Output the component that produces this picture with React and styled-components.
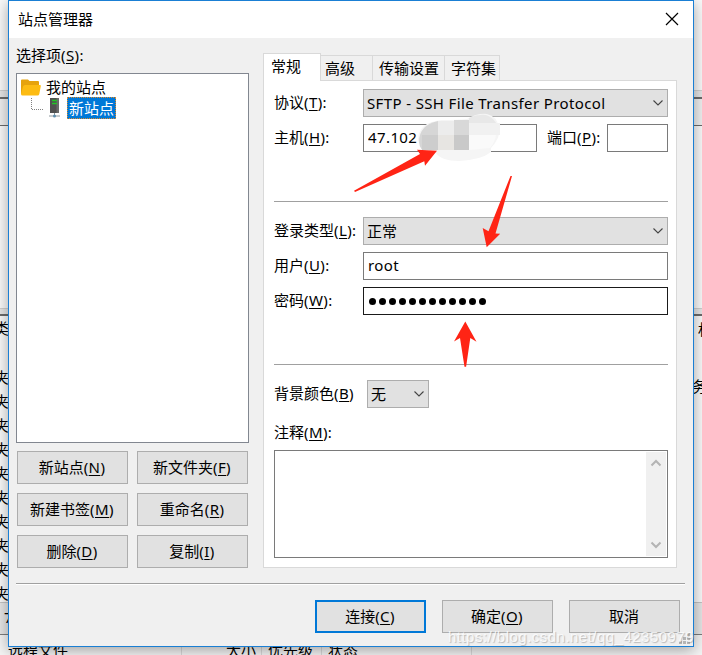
import React, { useState } from "react";
import styled, { createGlobalStyle } from "styled-components";

const GlobalStyle = createGlobalStyle`
  * {
    box-sizing: border-box;
  }
  body {
    margin: 0;
    overflow: hidden;
    font-family: "Noto Sans", "Noto Sans CJK SC", sans-serif;
    font-size: 15px;
    line-height: 20px;
    color: #000;
  }
  button, input, textarea {
    font: inherit;
    color: inherit;
  }
`;

const Screen = styled.div`
  position: relative;
  width: 702px;
  height: 655px;
  overflow: hidden;
  background-color: #f7f7f7;
`;

/* main window behind the dialog */
const MainWindow = styled.div`
  display: flex;
  flex-direction: column;
  height: 655px;
`;

const Band = styled.div`
  flex: none;
  height: ${(props) => props.$height}px;
  background-color: ${(props) => props.$color};
`;

const FileList = styled.div`
  display: flex;
  flex: none;
  justify-content: space-between;
  height: 286px;
  background-color: #fafafa;
`;

const FileColumn = styled.div`
  display: flex;
  flex-direction: column;
  width: 15px;
  margin-left: ${(props) => props.$shift || 0}px;
  margin-right: ${(props) => props.$right || 0}px;
  padding-top: ${(props) => props.$top}px;
`;

const FileCell = styled.span`
  height: 24px;
  line-height: 24px;
  margin-left: ${(props) => props.$shift || 0}px;
  margin-bottom: ${(props) => props.$after || 0}px;
  white-space: nowrap;
`;

const StatusBand = styled.div`
  flex: none;
  height: 32px;
  padding: 4px 4px;
  border-top: 1px solid #c4c4c4;
  background-color: #e6e6e6;
`;

const QueueHeader = styled.div`
  display: flex;
  height: 20px;
  background-color: #f4f4f4;
`;

const QueueCell = styled.div`
  flex: none;
  width: ${(props) => props.$width}px;
  padding: 5px 5px 0 ${(props) => props.$left || 6}px;
  border-right: 1px solid #d9d9d9;
  text-align: ${(props) => props.$align || "left"};
  white-space: nowrap;
`;

const Dialog = styled.div`
  position: absolute;
  top: 0;
  left: 8px;
  width: 686px;
  height: 647px;
  display: flex;
  flex-direction: column;
  border: 1px solid #1a7fd4;
  background-color: #f0f0f0;
  box-shadow: 0 3px 14px rgba(0, 0, 0, 0.35);
`;

const TitleBar = styled.div`
  display: flex;
  flex: none;
  justify-content: space-between;
  align-items: center;
  height: 37px;
  padding: 0 14px 2px 9px;
  background-color: #fff;
`;

const CloseButton = styled.button`
  display: flex;
  padding: 0;
  border: none;
  background: none;
`;

const Content = styled.div`
  display: flex;
  flex: none;
  height: 530px;
  padding-left: 7px;
`;

const Sidebar = styled.div`
  width: 233px;
  padding-top: 7px;
`;

const SidebarTitle = styled.div`
  height: 28px;
`;

const Tree = styled.div`
  height: 370px;
  padding: 3px 4px;
  border: 1px solid #828790;
  background-color: #fff;
`;

const TreeRow = styled.div`
  display: flex;
  align-items: center;
  height: 21px;
  padding-left: ${(props) => (props.$nested ? 10 : 0)}px;

  svg {
    flex: none;
  }
`;

const TreeLabel = styled.span`
  height: 22px;
  line-height: 20px;
  margin-top: -2px;
  margin-left: 3px;
  padding: 0 1px;
  border: 1px ${(props) => (props.$selected ? "dotted #e08a28" : "solid transparent")};
  background-color: ${(props) => (props.$selected ? "#0078d7" : "transparent")};
  color: ${(props) => (props.$selected ? "#fff" : "#000")};
`;

const ButtonGrid = styled.div`
  display: grid;
  grid-template-columns: 111px 111px;
  gap: 9px;
  padding: 8px 0 0 1px;
`;

const PushButton = styled.button`
  width: 111px;
  height: 33px;
  padding: 0 1px 2px 0;
  border: ${(props) => (props.$primary ? "2px solid #0078d7" : "1px solid #adadad")};
  background-color: #e1e1e1;
  line-height: 20px;
`;

const Notebook = styled.div`
  width: 414px;
  margin-left: 14px;
  padding-top: 15px;
`;

const TabBar = styled.div`
  display: flex;
  align-items: flex-end;
  height: 27px;
`;

const Tab = styled.button`
  position: relative;
  width: ${(props) => props.$width}px;
  height: ${(props) => (props.$active ? 28 : 25)}px;
  margin-bottom: ${(props) => (props.$active ? -1 : 0)}px;
  padding: ${(props) => (props.$active ? "0 6px 3px 7px" : `0 0 0 ${props.$indent}px`)};
  border: 1px solid #d9d9d9;
  border-left-width: ${(props) => (props.$active ? 1 : 0)}px;
  border-bottom: none;
  background-color: ${(props) => (props.$active ? "#fff" : "#f0f0f0")};
  text-align: left;
  white-space: nowrap;
`;

const Panel = styled.div`
  height: 488px;
  padding: 8px 8px 0 10px;
  border: 1px solid #d9d9d9;
  background-color: #fff;
`;

const FormRow = styled.div`
  display: flex;
  align-items: center;
  height: 28px;
  margin-bottom: ${(props) => props.$after || 0}px;
`;

const FieldLabel = styled.label`
  flex: none;
  width: ${(props) => props.$width || 89}px;
  margin-left: ${(props) => props.$before || 0}px;
  padding-bottom: 2px;
  white-space: nowrap;
`;

const ComboBox = styled.div`
  display: flex;
  justify-content: space-between;
  align-items: center;
  width: ${(props) => props.$width}px;
  height: 28px;
  padding: 0 3px 0 3px;
  border: 1px solid #adadad;
  background-color: #e1e1e1;
  white-space: nowrap;
`;

const ComboText = styled.span`
  padding-bottom: ${(props) => (props.$latin ? 1 : 0)}px;
  letter-spacing: ${(props) => (props.$latin ? 0.37 : 0)}px;
`;

const TextInput = styled.input`
  width: ${(props) => props.$width}px;
  height: 28px;
  padding: 0 4px 2px;
  border: 1px solid #7a7a7a;
  outline: none;
  background-color: #fff;
  letter-spacing: 0.4px;
`;

const PasswordBox = styled.div`
  display: flex;
  align-items: center;
  gap: 3px;
  width: 305px;
  height: 28px;
  padding-left: 5px;
  border: 1px solid #1a1a1a;
`;

const PasswordDot = styled.span`
  width: 7px;
  height: 7px;
  border-radius: 50%;
  background-color: #000;
`;

const Divider = styled.div`
  height: 1px;
  margin-bottom: ${(props) => props.$after || 0}px;
  background-color: #a0a0a0;
`;

const Comment = styled.div`
  display: flex;
  justify-content: flex-end;
  width: 394px;
  height: 108px;
  padding: 1px;
  border: 1px solid #7a7a7a;
`;

const ScrollBar = styled.div`
  display: flex;
  flex-direction: column;
  justify-content: space-between;
  align-items: center;
  width: 20px;
  padding: 7px 1px 7px 0;
  background-color: #f0f0f0;
`;

const FooterLine = styled.div`
  flex: none;
  height: 2px;
  margin: 15px 8px 0 7px;
  border-top: 1px solid #a0a0a0;
  border-bottom: 1px solid #fff;
`;

const Footer = styled.div`
  display: flex;
  justify-content: flex-end;
  gap: 16px;
  padding: 15px 13px 0 0;
`;

const Grip = styled.svg`
  position: absolute;
  right: 3px;
  bottom: 2px;
`;

const Overlay = styled.svg`
  position: absolute;
  top: 0;
  left: 0;
  pointer-events: none;
`;

const Watermark = styled.div`
  position: absolute;
  top: 627px;
  left: 448px;
  font-family: "Liberation Sans", sans-serif;
  font-size: 15px;
  letter-spacing: 0.48px;
  color: rgba(255, 255, 255, 0.8);
  text-shadow: 1px 1px 1px rgba(120, 120, 120, 0.45);
  white-space: nowrap;
`;

const HotkeyText = styled.span`
  letter-spacing: 0.4px;
`;

const Key = styled.span`
  text-decoration: underline;
  text-decoration-thickness: 1px;
  text-underline-offset: 2px;
  text-decoration-skip-ink: none;
`;

const Caption = ({ text, hotkey, colon }) => (
  <>
    {text}
    <HotkeyText>
      (<Key>{hotkey}</Key>){colon && ":"}
    </HotkeyText>
  </>
);

const Chevron = ({ up, color = "#444", thick = 1.1 }) => (
  <svg width="12" height="8" viewBox="0 0 12 8" fill="none">
    <path
      d={up ? "M1.5 6.5 6 2l4.5 4.5" : "M1.5 1.5 6 6l4.5-4.5"}
      stroke={color}
      strokeWidth={thick}
    />
  </svg>
);

const FolderIcon = () => (
  <svg width="20" height="17" viewBox="0 0 20 17">
    <path d="M0 1.5Q0 .5 1 .5h6l1.5 1.5h8.5q1 0 1 1V15H0z" fill="#e6a30d" />
    <path d="M4 6h15q1 0 .8 1l-1.5 8q-.3 1.5-1.8 1.5H1.5Q0 16.5 0 15l2-7.5Q2.5 6 4 6z" fill="#fdbc13" />
  </svg>
);

const BranchLine = () => (
  <svg width="13" height="21" viewBox="0 0 13 21" fill="none">
    <path d="M.5 0v11.5H13" stroke="#808080" strokeDasharray="1 1" />
  </svg>
);

const ServerIcon = () => (
  <svg width="20" height="21" viewBox="0 0 20 21">
    <path d="M6 0h9v15H6z" fill="#505050" />
    <path d="M12.5 0H15v15h-2.5z" fill="#6a6a6a" />
    <path d="M8 2.5h5M8 5.500h5" stroke="#22c526" strokeWidth="1.4" />
    <path d="M10.5 15v4M5 18h11" stroke="#8c969c" />
    <circle cx="10.5" cy="18" r="1.5" fill="#5f8fae" />
  </svg>
);

const sideButtons = [
  ["新站点", "N"],
  ["新文件夹", "F"],
  ["新建书签", "M"],
  ["重命名", "R"],
  ["删除", "D"],
  ["复制", "I"],
];

const tabs = [
  { name: "常规", width: 58, indent: 7 },
  { name: "高级", width: 52, indent: 4 },
  { name: "传输设置", width: 72, indent: 6 },
  { name: "字符集", width: 55, indent: 6 },
];

const folders = Array(10).fill("夹");

const App = () => {
  const [activeTab, setActiveTab] = useState("常规");

  return (
    <Screen>
      <GlobalStyle />
      <MainWindow>
        <Band $height={90} $color="#fafafa" />
        <Band $height={1} $color="#cfcfcf" />
        <Band $height={6} $color="#e6e6e6" />
        <Band $height={2} $color="#6b6b6b" />
        <Band $height={26} $color="#f0f0f0" />
        <Band $height={1} $color="#6b6b6b" />
        <Band $height={182} $color="#fafafa" />
        <Band $height={1} $color="#cfcfcf" />
        <Band $height={5} $color="#e6e6e6" />
        <Band $height={2} $color="#6b6b6b" />
        <FileList>
          <FileColumn $shift={-6} $top={0}>
            <FileCell $after={25}>类</FileCell>
            {folders.map((name, index) => (
              <FileCell key={index}>{name}</FileCell>
            ))}
          </FileColumn>
          <FileColumn $right={-11} $top={1}>
            <FileCell $after={33}>权</FileCell>
            <FileCell $shift={-6}>务</FileCell>
          </FileColumn>
        </FileList>
        <StatusBand>7</StatusBand>
        <Band $height={1} $color="#7d7d7d" />
        <QueueHeader>
          <QueueCell $width={182} $left={8}>远程文件</QueueCell>
          <QueueCell $width={80} $align="right">大小</QueueCell>
          <QueueCell $width={60}>优先级</QueueCell>
          <QueueCell $width={150}>状态</QueueCell>
        </QueueHeader>
      </MainWindow>

      <Dialog>
        <TitleBar>
          站点管理器
          <CloseButton>
            <svg width="14" height="14" viewBox="0 0 14 14">
              <path d="M1 1l12 12M13 1 1 13" stroke="#000" strokeWidth="1.2" />
            </svg>
          </CloseButton>
        </TitleBar>
        <Content>
          <Sidebar>
            <SidebarTitle>
              <Caption text="选择项" hotkey="S" colon />
            </SidebarTitle>
            <Tree>
              <TreeRow>
                <FolderIcon />
                <TreeLabel>我的站点</TreeLabel>
              </TreeRow>
              <TreeRow $nested>
                <BranchLine />
                <ServerIcon />
                <TreeLabel $selected>新站点</TreeLabel>
              </TreeRow>
            </Tree>
            <ButtonGrid>
              {sideButtons.map(([text, hotkey]) => (
                <PushButton key={hotkey}>
                  <Caption text={text} hotkey={hotkey} />
                </PushButton>
              ))}
            </ButtonGrid>
          </Sidebar>

          <Notebook>
            <TabBar>
              {tabs.map((tab) => (
                <Tab
                  key={tab.name}
                  $width={tab.width}
                  $indent={tab.indent}
                  $active={tab.name === activeTab}
                  onClick={() => setActiveTab(tab.name)}
                >
                  {tab.name}
                </Tab>
              ))}
            </TabBar>
            <Panel>
              <FormRow $after={7}>
                <FieldLabel>
                  <Caption text="协议" hotkey="T" colon />
                </FieldLabel>
                <ComboBox $width={305}>
                  <ComboText $latin>SFTP - SSH File Transfer Protocol</ComboText>
                  <Chevron />
                </ComboBox>
              </FormRow>
              <FormRow $after={49}>
                <FieldLabel>
                  <Caption text="主机" hotkey="H" colon />
                </FieldLabel>
                <TextInput $width={174} defaultValue="47.102" />
                <FieldLabel $before={10} $width={60}>
                  <Caption text="端口" hotkey="P" colon />
                </FieldLabel>
                <TextInput $width={61} />
              </FormRow>
              <Divider $after={15} />
              <FormRow $after={7}>
                <FieldLabel>
                  <Caption text="登录类型" hotkey="L" colon />
                </FieldLabel>
                <ComboBox $width={305}>
                  <ComboText>正常</ComboText>
                  <Chevron />
                </ComboBox>
              </FormRow>
              <FormRow $after={7}>
                <FieldLabel>
                  <Caption text="用户" hotkey="U" colon />
                </FieldLabel>
                <TextInput $width={305} defaultValue="root" />
              </FormRow>
              <FormRow $after={49}>
                <FieldLabel>
                  <Caption text="密码" hotkey="W" colon />
                </FieldLabel>
                <PasswordBox>
                  {Array.from({ length: 12 }, (_, i) => (
                    <PasswordDot key={i} />
                  ))}
                </PasswordBox>
              </FormRow>
              <Divider $after={15} />
              <FormRow $after={11}>
                <FieldLabel $width={93}>
                  <Caption text="背景颜色" hotkey="B" />
                </FieldLabel>
                <ComboBox $width={62}>
                  <ComboText>无</ComboText>
                  <Chevron />
                </ComboBox>
              </FormRow>
              <FormRow $after={3}>
                <FieldLabel>
                  <Caption text="注释" hotkey="M" colon />
                </FieldLabel>
              </FormRow>
              <Comment>
                <ScrollBar>
                  <Chevron up color="#b4b4b4" thick={2} />
                  <Chevron color="#b4b4b4" thick={2} />
                </ScrollBar>
              </Comment>
            </Panel>
          </Notebook>
        </Content>
        <FooterLine />
        <Footer>
          <PushButton $primary>
            <Caption text="连接" hotkey="C" />
          </PushButton>
          <PushButton>
            <Caption text="确定" hotkey="O" />
          </PushButton>
          <PushButton>取消</PushButton>
        </Footer>
        <Grip width="11" height="11" viewBox="0 0 11 11" fill="#b5b5b5">
          <path d="M8 0h3v3H8zM4 4h3v3H4zM8 4h3v3H8zM0 8h3v3H0zM4 8h3v3H4zM8 8h3v3H8z" />
        </Grip>
      </Dialog>

      <Overlay width="702" height="655" viewBox="0 0 702 655">
        {/* smudge over the host address */}
        <path
          d="M418 139q1-17 24-19 15 0 25-1 10-6 20-5 10 2 12 14 2 9-8 20v4q-10 8-32 9-18 0-24-9-17-4-17-13z"
          fill="#f5f5f5"
        />
        <path d="M419 142q0-17 19-21v29h-16q-3-4-3-8z" fill="#d6d6d6" />
        <path d="M422 135h16v15h-16z" fill="#cdcdcd" />
        <path d="M438 121h16v14h-16z" fill="#ececec" />
        <path d="M438 135h16v15h-16z" fill="#e7e5e2" />
        <path d="M454 120h15v15h-15z" fill="#d8d8d8" />
        <path d="M454 135h15v15h-15z" fill="#c9c9c9" />
        <path d="M469 118q8-4 17-3 12 4 14 20h-31z" fill="#e8e8e8" />
        <path d="M469 123h31v12h-31z" fill="#f1f1f1" />
        <path d="M469 135h27q-1 7-6 13l-21 2z" fill="#fafafa" />
        <g fill="#ff2415">
          <path d="M354 190.8 420 154l-3-4.3 20 1-12 15-.7-4.5L355 192z" />
          <path d="M510.5 176h1.5L495.500 233.500l4.700.2-13.500 13.600-4-19.300 5.800 3.300z" />
          <path d="M465.300 321.500 476.500 341.700l-6.200-3.700-4.200 28.700h-1.600L460 338l-6 3.500z" />
        </g>
      </Overlay>
      <Watermark>https://blog.csdn.net/qq_42350979</Watermark>
    </Screen>
  );
};

export default App;
